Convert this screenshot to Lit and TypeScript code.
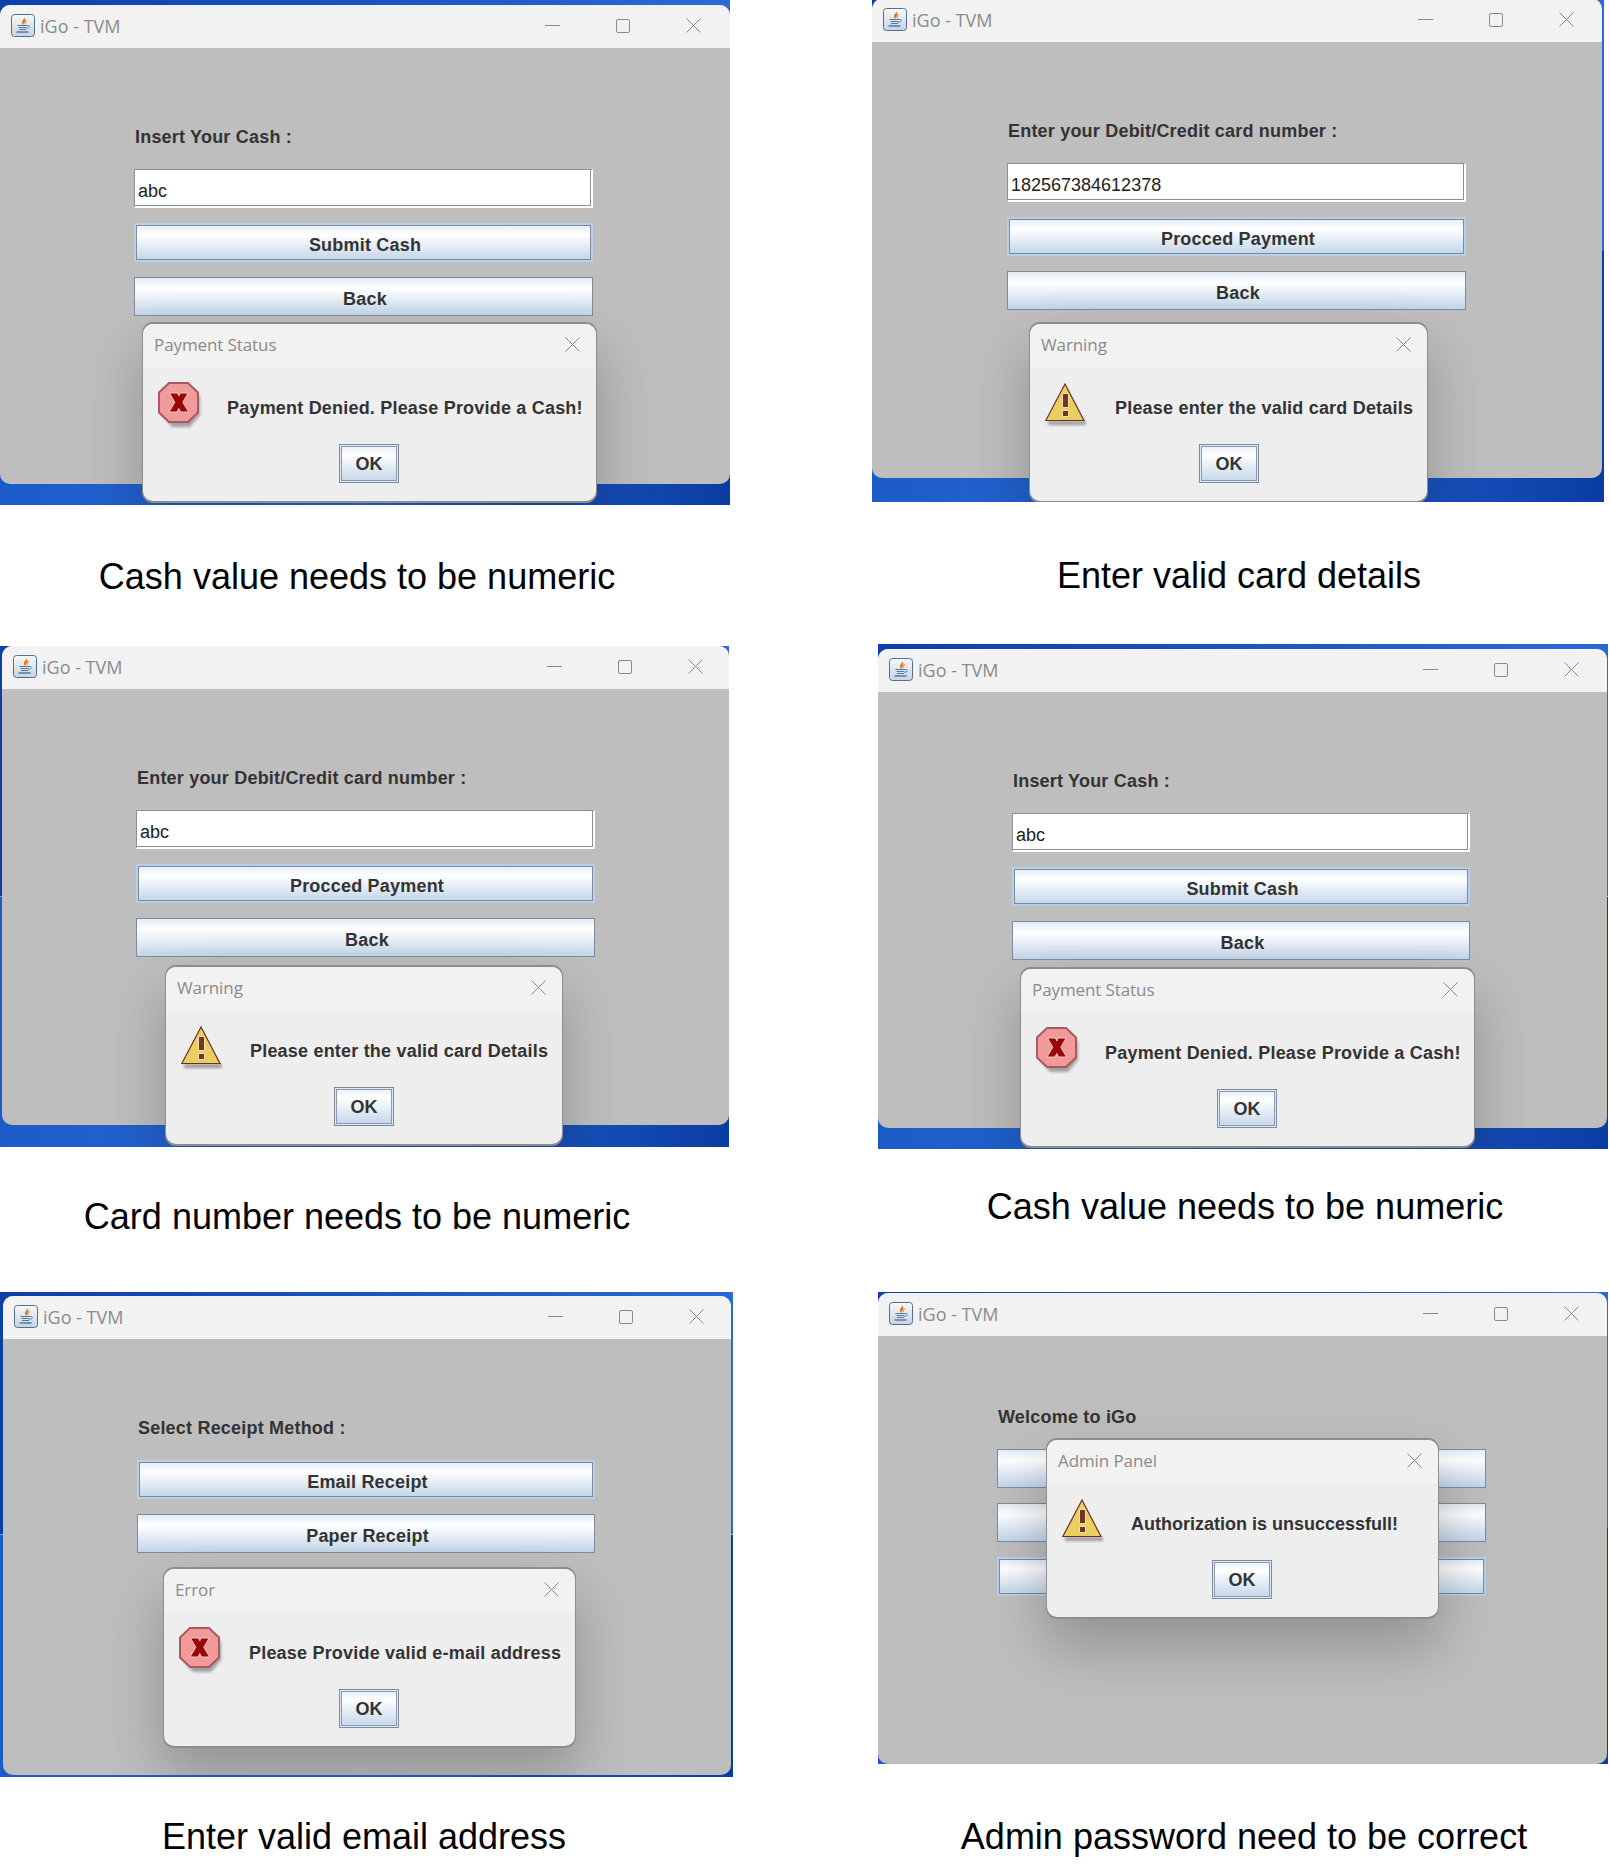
import { LitElement, html, css, svg } from "lit";
import { customElement } from "lit/decorators.js";

// all coordinates are page pixels, measured from the reference
type Dialog = { x: number; y: number; w: number; title: string; kind: "error" | "warn"; msg: string; msgX: number; okX: number; tight?: boolean };
type Shot = {
  col: number;
  row: number;
  x: number; y: number; w: number; h: number;
  win: { l: number; t: number; r: number; b: number };
  ctlRight: number;
  form: { x: number; w: number; labelY: number };
  label: string;
  field?: string;
  buttons: string[];
  focused: number;
  dialog: Dialog;
  caption: string;
  capX: number; capY: number;
};

const COLS = [0, 872];
const ROWS = [0, 644, 1292];

const denied = "Payment Denied. Please Provide a Cash!";
const invalid = "Please enter the valid card Details";

const SHOTS: Shot[] = [
  {
    col: 0, row: 0, x: 0, y: 0, w: 730, h: 505,
    win: { l: 0, t: 5, r: 730, b: 484 }, ctlRight: 29,
    form: { x: 134, w: 459, labelY: 137 },
    label: "Insert Your Cash :", field: "abc", buttons: ["Submit Cash", "Back"], focused: 0,
    dialog: { x: 142, y: 323, w: 455, title: "Payment Status", kind: "error", msg: denied, msgX: 227, okX: 339 },
    caption: "Cash value needs to be numeric", capX: 357, capY: 577,
  },
  {
    col: 1, row: 0, x: 872, y: 0, w: 732, h: 502,
    win: { l: 872, t: -1, r: 1602, b: 478 }, ctlRight: 28,
    form: { x: 1007, w: 459, labelY: 131 },
    label: "Enter your Debit/Credit card number :", field: "182567384612378", buttons: ["Procced Payment", "Back"], focused: 0,
    dialog: { x: 1029, y: 323, w: 399, title: "Warning", kind: "warn", msg: invalid, msgX: 1115, okX: 1199 },
    caption: "Enter valid card details", capX: 1239, capY: 576,
  },
  {
    col: 0, row: 1, x: 0, y: 646, w: 729, h: 501,
    win: { l: 2, t: 646, r: 729, b: 1125 }, ctlRight: 26,
    form: { x: 136, w: 459, labelY: 778 },
    label: "Enter your Debit/Credit card number :", field: "abc", buttons: ["Procced Payment", "Back"], focused: 0,
    dialog: { x: 165, y: 966, w: 398, title: "Warning", kind: "warn", msg: invalid, msgX: 250, okX: 334 },
    caption: "Card number needs to be numeric", capX: 357, capY: 1217,
  },
  {
    col: 1, row: 1, x: 878, y: 644, w: 730, h: 505,
    win: { l: 878, t: 649, r: 1607, b: 1128 }, ctlRight: 28,
    form: { x: 1012, w: 458, labelY: 781 },
    label: "Insert Your Cash :", field: "abc", buttons: ["Submit Cash", "Back"], focused: 0,
    dialog: { x: 1020, y: 968, w: 455, title: "Payment Status", kind: "error", msg: denied, msgX: 1105, okX: 1217 },
    caption: "Cash value needs to be numeric", capX: 1245, capY: 1207,
  },
  {
    col: 0, row: 2, x: 0, y: 1292, w: 733, h: 485,
    win: { l: 3, t: 1296, r: 731, b: 1775 }, ctlRight: 27,
    form: { x: 137, w: 458, labelY: 1428 },
    label: "Select Receipt Method :", buttons: ["Email Receipt", "Paper Receipt"], focused: 0,
    dialog: { x: 163, y: 1568, w: 413, title: "Error", kind: "error", msg: "Please Provide valid e-mail address", msgX: 249, okX: 339 },
    caption: "Enter valid email address", capX: 364, capY: 1837,
  },
  {
    col: 1, row: 2, x: 878, y: 1292, w: 730, h: 472,
    win: { l: 878, t: 1293, r: 1607, b: 1764 }, ctlRight: 28,
    form: { x: 997, w: 489, labelY: 1417 },
    label: "Welcome to iGo", buttons: ["", "", ""], focused: 2,
    dialog: { x: 1046, y: 1439, w: 393, title: "Admin Panel", kind: "warn", msg: "Authorization is unsuccessfull!", msgX: 1131, okX: 1212, tight: true },
    caption: "Admin password need to be correct", capX: 1244, capY: 1837,
  },
];

const javaIcon = svg`
  <svg class="java" width="24" height="23" viewBox="0 0 24 23">
    <defs>
      <linearGradient id="jg" x1="0" y1="0" x2="0" y2="1">
        <stop offset="0" stop-color="#f6f9fc"/><stop offset="1" stop-color="#c6d3e1"/>
      </linearGradient>
    </defs>
    <rect x=".5" y=".5" width="23" height="22" rx="3" fill="url(#jg)" stroke="#4f7090"/>
    <path d="M13 2.500c1.200 2.500-3 4-2 6.800.4 1 1.500 1.700 1.500 1.700-.5-1.800 3-2.800 1.700-5.800C13.800 4.400 13.500 3.400 13 2.500z" fill="#e67a1e"/>
    <path d="M15.800 6c-.3 1.400-2 2-1.600 4.300" fill="none" stroke="#ee9440" stroke-width="1"/>
    <path d="M6.500 11.500h10M7.500 13.500h8M8 15.500h7" stroke="#557a9c" stroke-width="1.100" fill="none"/>
    <path d="M16.500 11.500c2.500-.5 2.500 2.500-1 3" stroke="#557a9c" fill="none"/>
    <path d="M5.500 18h12" stroke="#557a9c" stroke-width="1.400"/>
  </svg>`;

const errorIcon = svg`
  <svg width="46" height="48" viewBox="0 0 46 48">
    <defs><filter id="eb" x="-20%" y="-20%" width="140%" height="140%"><feGaussianBlur stdDeviation="1.600"/></filter></defs>
    <path d="M14 5h18l10 10v18L32 45H14L4 33V15z" fill="#000" opacity=".32" filter="url(#eb)"/>
    <path d="M11 1h19L40 10.500v20L30 40H11L1 30.500v-20z" fill="#f09a9a" stroke="#a95a60" stroke-width="2"/>
    <path d="M11.500 11h8l1.300 3 1.300-3h8l-5.300 9.300 5.800 9.700h-8l-1.800-3.500-1.800 3.500h-8l5.800-9.700z" fill="#9a0606" stroke="#f8c4c4" stroke-width="1"/>
  </svg>`;

const warnIcon = svg`
  <svg width="42" height="46" viewBox="0 0 42 46">
    <defs><filter id="wb" x="-20%" y="-40%" width="140%" height="180%"><feGaussianBlur stdDeviation="1.500"/></filter></defs>
    <rect x="3" y="39" width="38" height="4" fill="#000" opacity=".35" filter="url(#wb)"/>
    <path d="M20 2 39 38.500H.8z" fill="#e8cf60" stroke="#6d2c2c" stroke-width="1.200" stroke-linejoin="miter"/>
    <path d="M17.500 11.500h6v14h-6zM17.500 28.500h6v6h-6z" fill="#7a2f2f" stroke="#f7ecb0" stroke-width=".9"/>
  </svg>`;

const closeIcon = svg`
  <svg width="15" height="15" viewBox="0 0 15 15"><path d="M.5.5 14.500 14.500M14.500.5.5 14.500" stroke="#8a8a8a" stroke-width="1" fill="none"/></svg>`;

@customElement("app-root")
export class AppRoot extends LitElement {
  static styles = css`
    :host {
      display: block;
      width: 1610px;
      min-height: 1867px;
      background: #fff;
      font-family: "Liberation Sans", Arial, sans-serif;
    }

    .page {
      display: grid;
      grid-template-columns: 872px 738px;
      grid-template-rows: 644px 648px 575px;
    }

    .cell {
      display: flex;
      flex-direction: column;
      align-items: flex-start;
      min-width: 0;
    }

    .shot {
      position: relative;
      overflow: hidden;
      flex: none;
      background:
        linear-gradient(to right, #0d3fa8, #2a6ad8) top / 100% 50% no-repeat,
        linear-gradient(to right, #1c5cc8 0%, #2a68d8 50%, #0a3da3 100%) bottom / 100% 50% no-repeat;
    }

    .window {
      display: flex;
      flex-direction: column;
      background: #bebebe;
      border-radius: 10px;
      overflow: hidden;
    }

    .titlebar {
      flex: none;
      box-sizing: border-box;
      display: flex;
      align-items: center;
      height: 43px;
      padding: 0 0 2px 11px;
      background: #f2f2f2;
    }

    .java { flex: none; margin-right: 5px; }

    .titlebar .name {
      flex: 1;
      font: 400 18px "Open Sans", sans-serif;
      color: #8b8b8b;
      white-space: nowrap;
    }

    .ctl {
      display: flex;
      align-items: center;
      gap: 56px;
    }

    .min { width: 15px; height: 1px; background: #8a8a8a; }
    .max { width: 12px; height: 12px; border: 1px solid #8a8a8a; border-radius: 2px; }

    .form {
      display: flex;
      flex-direction: column;
      gap: 15px;
    }

    .label {
      height: 20px;
      line-height: 20px;
      margin: 0 0 7px 1px;
      font-weight: 700;
      font-size: 18px;
      letter-spacing: 0.2px;
      color: #333;
      white-space: nowrap;
    }

    .field {
      box-sizing: border-box;
      height: 39px;
      padding: 9px 0 0 3px;
      background: #fff;
      border: 2px solid #fff;
      border-top: 1px solid #87919d;
      border-left: 1px solid #87919d;
      box-shadow: inset -1px -1px 0 #87919d;
      font-size: 18px;
      line-height: 24px;
      color: #222;
    }

    .btn {
      position: relative;
      box-sizing: border-box;
      height: 39px;
      display: flex;
      align-items: center;
      justify-content: center;
      padding: 5px 0 0 3px;
      border: 1px solid #7c8b9e;
      background: linear-gradient(to bottom, #e3ecf5 0%, #ffffff 28%, #c2d5e9 100%);
      font-weight: 700;
      font-size: 18px;
      letter-spacing: 0.2px;
      color: #333;
    }

    .btn.focused { border: 2px solid #b7d0e8; }

    .btn.focused::before {
      content: "";
      position: absolute;
      inset: 0;
      border: 1px solid #7c8b9e;
    }

    .dialog {
      position: absolute;
      display: flex;
      flex-direction: column;
      box-sizing: border-box;
      height: 177px;
      background: #eee;
      border-radius: 10px;
      box-shadow: 0 -1px 0 1px #8d8d8d, 0 1px 0 1px #8d8d8d, 0 28px 55px 4px rgba(0, 0, 0, 0.22);
    }

    .dlg-title {
      flex: none;
      box-sizing: border-box;
      display: flex;
      align-items: center;
      justify-content: space-between;
      height: 43px;
      padding: 0 16px 2px 11px;
      background: #f2f2f2;
      border-radius: 10px 10px 0 0;
      font: 400 17px "Open Sans", sans-serif;
      letter-spacing: -0.1px;
      color: #8b8b8b;
    }

    .dlg-row {
      display: flex;
      align-items: flex-start;
      height: 41px;
      margin-top: 15px;
      padding-left: 15px;
    }

    .dlg-icon { flex: none; width: 41px; height: 41px; }

    .msg {
      margin-top: 16px;
      line-height: 20px;
      font-weight: 700;
      font-size: 18px;
      letter-spacing: 0.2px;
      color: #333;
      white-space: nowrap;
    }

    .msg.tight { letter-spacing: 0; }

    .ok {
      box-sizing: border-box;
      margin-top: 21px;
      width: 60px;
      height: 39px;
      display: flex;
      align-items: center;
      justify-content: center;
      padding-top: 2px;
      border: 1px solid #7c8b9e;
      box-shadow: inset 0 0 0 1px #dfe8f2, inset 0 0 0 2px #8a9bb0;
      background: linear-gradient(to bottom, #e3ecf5 0%, #ffffff 25%, #c2d5e9 100%);
      font-weight: 700;
      font-size: 18px;
      color: #333;
    }

    .caption {
      flex: none;
      width: 720px;
      height: 44px;
      line-height: 44px;
      font-size: 36px;
      color: #000;
      text-align: center;
      white-space: nowrap;
    }
  `;

  renderDialog(s: Shot) {
    const d = s.dialog;
    return html`
      <div class="dialog" style="left:${d.x + 1 - s.x}px;top:${d.y + 1 - s.y}px;width:${d.w - 2}px">
        <div class="dlg-title"><span>${d.title}</span>${closeIcon}</div>
        <div class="dlg-row">
          <div class="dlg-icon">${d.kind === "error" ? errorIcon : warnIcon}</div>
          <div class="msg ${d.tight ? "tight" : ""}" style="margin-left:${d.msgX - d.x - 57}px">${d.msg}</div>
        </div>
        <div class="ok" style="margin-left:${d.okX - d.x - 1}px">OK</div>
      </div>
    `;
  }

  renderShot(s: Shot) {
    const { win, form } = s;
    const titleBottom = win.t + 43;
    return html`
      <div class="cell" style="grid-column:${s.col + 1};grid-row:${s.row + 1}">
        <div class="shot" style="margin-left:${s.x - COLS[s.col]}px;margin-top:${s.y - ROWS[s.row]}px;width:${s.w}px;height:${s.h}px">
          <div class="window" style="margin-left:${win.l - s.x}px;margin-top:${win.t - s.y}px;width:${win.r - win.l}px;height:${win.b - win.t}px">
            <div class="titlebar">
              ${javaIcon}
              <span class="name">iGo - TVM</span>
              <div class="ctl" style="margin-right:${s.ctlRight}px"><div class="min"></div><div class="max"></div>${closeIcon}</div>
            </div>
            <div class="form" style="margin-top:${form.labelY - 10 - titleBottom}px;margin-left:${form.x - win.l}px;width:${form.w}px">
              <div class="label">${s.label}</div>
              ${s.field ? html`<div class="field">${s.field}</div>` : ""}
              ${s.buttons.map((b, i) => html`<div class="btn ${i === s.focused ? "focused" : ""}">${b}</div>`)}
            </div>
          </div>
          ${this.renderDialog(s)}
        </div>
        <div class="caption" style="margin-left:${s.capX - 360 - COLS[s.col]}px;margin-top:${s.capY - 22 - s.y - s.h}px">${s.caption}</div>
      </div>
    `;
  }

  render() {
    return html`<div class="page">${SHOTS.map((s) => this.renderShot(s))}</div>`;
  }
}
